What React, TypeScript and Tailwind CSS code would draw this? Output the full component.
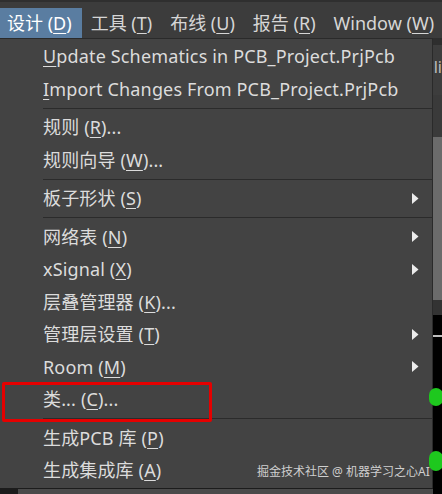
import React from "react";

type Row =
  | { kind: "item"; pre: string; key: string; post: string; arrow?: boolean }
  | { kind: "sep" };

const rows: Row[] = [
  { kind: "item", pre: "", key: "U", post: "pdate Schematics in PCB_Project.PrjPcb" },
  { kind: "item", pre: "", key: "I", post: "mport Changes From PCB_Project.PrjPcb" },
  { kind: "sep" },
  { kind: "item", pre: "规则 (", key: "R", post: ")..." },
  { kind: "item", pre: "规则向导 (", key: "W", post: ")..." },
  { kind: "sep" },
  { kind: "item", pre: "板子形状 (", key: "S", post: ")", arrow: true },
  { kind: "sep" },
  { kind: "item", pre: "网络表 (", key: "N", post: ")", arrow: true },
  { kind: "item", pre: "xSignal (", key: "X", post: ")", arrow: true },
  { kind: "item", pre: "层叠管理器 (", key: "K", post: ")..." },
  { kind: "item", pre: "管理层设置 (", key: "T", post: ")", arrow: true },
  { kind: "item", pre: "Room (", key: "M", post: ")", arrow: true },
  { kind: "item", pre: "类... (", key: "C", post: ")..." },
  { kind: "sep" },
  { kind: "item", pre: "生成PCB 库 (", key: "P", post: ")" },
  { kind: "item", pre: "生成集成库 (", key: "A", post: ")" },
];

const menus = [
  { pre: "设计 (", key: "D", post: ")", active: true },
  { pre: "工具 (", key: "T", post: ")" },
  { pre: "布线 (", key: "U", post: ")" },
  { pre: "报告 (", key: "R", post: ")" },
  { pre: "Window (", key: "W", post: ")" },
];

const font = { fontFamily: '"Noto Sans", "Noto Sans CJK SC", sans-serif' };

export default function App() {
  return (
    <div
      className="relative w-[442px] h-[494px] overflow-hidden bg-black text-[18px] leading-none"
      style={font}
    >
      {/* MENU BAR */}
      <div className="h-[38px] bg-[#3c3c3c] border-t-[2px] border-[#2f2f2f] pt-[6px] flex whitespace-nowrap">
        {menus.map((m, i) => (
          <div
            key={i}
            className={
              "h-[30px] flex items-center " +
              (i === 0 ? "pl-[7px] pr-[10px] " : "px-[9px] ") +
              (m.active ? "bg-[#5a7da1] text-white" : "text-[#d6d6d6]")
            }
          >
            {m.pre}
            <span className="underline underline-offset-[3px] decoration-1">{m.key}</span>
            {m.post}
          </div>
        ))}
      </div>

      <div className="flex h-[456px]">
        {/* DROPDOWN */}
        <div className="w-[434px] flex flex-col">
          <div className="h-[450px] bg-[#434343] border-r border-t border-[#2a2a2a] pt-[1px] text-[#dcdcdc] tracking-[0.15px]">
            {rows.map((r, i) =>
              r.kind === "sep" ? (
                <div key={i} className="h-[6px] flex items-center pl-[43px]">
                  <div className="h-px w-full bg-[#2b2b2b]" />
                </div>
              ) : (
                <div key={i} className="h-[32.5px] flex items-center pl-[43px] pr-[12px] whitespace-nowrap">
                  <span className="flex-1">
                    {r.pre}
                    <span className="underline underline-offset-[3px] decoration-1">{r.key}</span>
                    {r.post}
                  </span>
                  {r.arrow && (
                    <svg width="7" height="11" viewBox="0 0 7 11" className="mr-[1px]">
                      <path d="M0 0 L6.5 5.5 L0 11 Z" fill="#ececec" />
                    </svg>
                  )}
                </div>
              )
            )}
          </div>
          <div className="flex-1 bg-[#1c1c1c] pl-[18px] pt-[1px]">
            <div className="h-full bg-[#4a4a4a]" />
          </div>
        </div>

        {/* APP BACKGROUND ON THE RIGHT */}
        <div className="flex-1 flex flex-col">
          <div className="h-[7px] bg-[#2e2e2e]" />
          <div className="h-[50px] bg-[#3d3d3d] text-[#bdbdbd] text-[16px] pt-[14px] pl-[1px]">li</div>
          <div className="h-[42px] bg-[#3a3a3a]" />
          <div className="h-[163px] bg-[#6b6b6b]" />
          <div className="h-[15px] bg-[#333333]" />
          <div className="relative flex-1 bg-black">
            <div className="absolute left-0 top-[20px] w-full h-[2px] bg-[#bdbdbd]" />
            <div className="absolute left-[-4px] top-[73px] w-[14px] h-[18px] rounded-full bg-[#1ec81e]" />
            <div className="absolute left-[-4px] top-[136px] w-[14px] h-[20px] rounded-full bg-[#1ec81e]" />
          </div>
        </div>
      </div>

      {/* RED HIGHLIGHT */}
      <div className="absolute left-[2px] top-[382px] w-[210px] h-[40px] border-[3.5px] border-[#e50000] rounded-[2px]" />

      {/* WATERMARK */}
      <div className="absolute left-[257px] top-[466px] text-[12px] text-[#cfcfcf] whitespace-nowrap">
        掘金技术社区 @ 机器学习之心AI
      </div>
    </div>
  );
}
